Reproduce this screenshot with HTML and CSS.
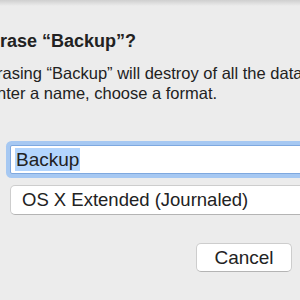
FILE: index.html
```html
<html>

<head>
    <title>Erase</title>
    <link rel="stylesheet" href="styles.css">
</head>

<body>
    <div class="sheet">
        <div class="title">Erase “Backup”?</div>
        <div class="message">
            <div class="line">Erasing “Backup” will destroy of all the data stored on it.</div>
            <div class="line">Enter a name, choose a format.</div>
        </div>
        <div class="fields">
            <div class="name_field"><span class="selected">Backup</span></div>
            <div class="popup">OS X Extended (Journaled)</div>
        </div>
        <div class="buttons">
            <div class="button">Cancel</div>
        </div>
    </div>
</body>

</html>
```

FILE: styles.css
```css
body {
    margin: 0;
    width: 300px;
    height: 300px;
    overflow: hidden;
    background: linear-gradient(#cfcfcf, #ececec 6px);
    font-family: "Liberation Sans", Arial, sans-serif;
    color: #222;
}

.sheet {
    margin-left: -12px;
    width: 312px;
    padding-top: 29px;
}

.title {
    font-size: 18px;
    font-weight: bold;
    line-height: 24px;
    white-space: nowrap;
}

.message {
    margin-top: 10px;
    margin-left: -2px;
    font-size: 16.5px;
    line-height: 20px;
    white-space: nowrap;
}

.fields {
    margin-top: 42px;
    margin-left: 22px;
    width: 360px;
}

.name_field {
    height: 29px;
    box-sizing: border-box;
    border: 1px solid #7ea8df;
    border-radius: 2px;
    box-shadow: 0 0 0 4px #a6c8f2;
    background-color: white;
    padding: 2px 0 0 4px;
}

.selected {
    display: inline-block;
    height: 23px;
    line-height: 23px;
    padding: 0 1px;
    font-size: 19px;
    background-color: #b3d5fd;
}

.popup {
    margin-top: 11px;
    height: 30px;
    box-sizing: border-box;
    border: 1px solid #cdcdcd;
    border-bottom-color: #b4b4b4;
    border-radius: 5px;
    background-color: white;
    padding-left: 11px;
    font-size: 18.5px;
    line-height: 28px;
}

.buttons {
    margin-top: 28px;
    display: flex;
    justify-content: flex-end;
    padding-right: 8px;
}

.button {
    width: 96px;
    height: 29px;
    box-sizing: border-box;
    border: 1px solid #cdcdcd;
    border-bottom-color: #b4b4b4;
    border-radius: 5px;
    background-color: white;
    display: flex;
    justify-content: center;
    align-items: center;
    font-size: 19px;
}
```
